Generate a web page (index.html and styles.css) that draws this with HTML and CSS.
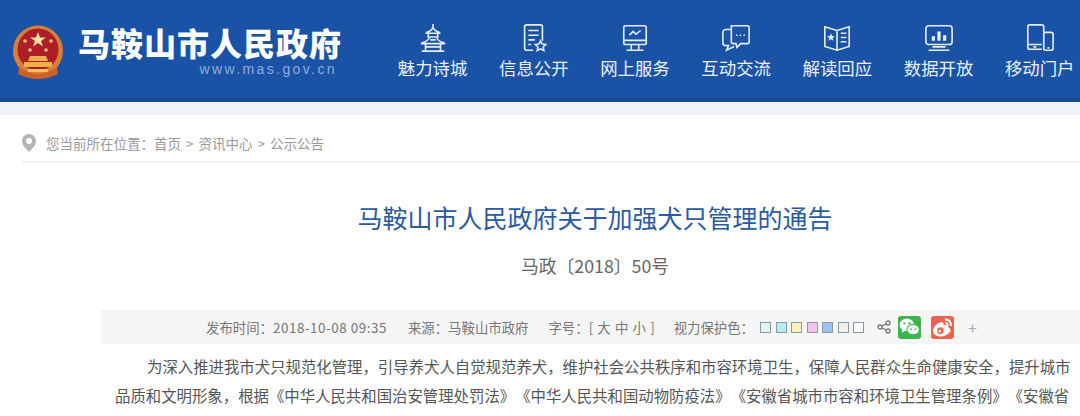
FILE: index.html
```html
<!DOCTYPE html>
<html lang="zh-CN">
<head>
<meta charset="utf-8">
<title>马鞍山市人民政府关于加强犬只管理的通告</title>
<link rel="stylesheet" href="styles.css">
</head>
<body>
<header class="top">
  <svg class="emblem" viewBox="0 0 50 56">
    <ellipse cx="25" cy="26" rx="25" ry="25.500" fill="#d67f36"/>
    <ellipse cx="25" cy="24.500" rx="20.500" ry="21" fill="#ad1e28"/>
    <path d="M25 7l2 5.500h5.800l-4.700 3.400 1.800 5.600-4.900-3.400-4.900 3.400 1.800-5.600-4.700-3.400H23z" fill="#f7dfa0"/>
    <circle cx="12" cy="16" r="1.800" fill="#f2c878"/><circle cx="38" cy="16" r="1.800" fill="#f2c878"/>
    <circle cx="17" cy="25" r="1.800" fill="#f2c878"/><circle cx="33" cy="25" r="1.800" fill="#f2c878"/>
    <path d="M17 31h16l2 5H15zM11 37h28v5H11z" fill="#eeb04a"/>
    <path d="M6 42q19 14 38 0l1 7q-20 10-40 0z" fill="#cf5f2a"/>
    <path d="M15 44h20v3H15z" fill="#f0c060"/>
  </svg>
  <div class="brand">
    <div class="brand-name">马鞍山市人民政府</div>
    <div class="brand-url">www.mas.gov.cn</div>
  </div>
  <nav class="nav">
    <a class="nav-item">
      <svg class="nav-icon" viewBox="0 0 32 32"><path d="M16 1v4M9 10q5-1 7-5 2 4 7 5M8 11h16M11 11v4M21 11v4M10 15h12M4 21q6-1 8-5M28 21q-6-1-8-5M3 22h26M8 22v7M24 22v7M8 25.500h16M4 30h24M13 18h6"/></svg>
      <span>魅力诗城</span>
    </a>
    <a class="nav-item">
      <svg class="nav-icon" viewBox="0 0 32 32"><path d="M15 29H8a2 2 0 0 1-2-2V4a2 2 0 0 1 2-2h15a2 2 0 0 1 2 2v15M10 8h11M10 13h11M10 18h7M10 23h3"/><path d="M23 19l1.800 3.500 3.700.5-2.700 2.600.7 3.700-3.500-1.800-3.500 1.800.7-3.700-2.700-2.600 3.700-.5z"/></svg>
      <span>信息公开</span>
    </a>
    <a class="nav-item">
      <svg class="nav-icon" viewBox="0 0 32 32"><rect x="4" y="3" width="24" height="20" rx="2"/><path d="M4 18.500h24M12 23v5M20 23v5M7 29h18M10 13l4-4 3 3 5-4"/></svg>
      <span>网上服务</span>
    </a>
    <a class="nav-item">
      <svg class="nav-icon" viewBox="0 0 32 32"><path d="M11 3h17a2 2 0 0 1 2 2v15a2 2 0 0 1-2 2H21l-4 4-1-4h-3a2 2 0 0 1-2-2z"/><path d="M11 7H5a3 3 0 0 0-3 3v11a3 3 0 0 0 3 3h3l-2 5 8-4"/><path d="M16 13h1.500M20 13h1.500M24 13h1.500"/></svg>
      <span>互动交流</span>
    </a>
    <a class="nav-item">
      <svg class="nav-icon" viewBox="0 0 32 32"><path d="M16 8L3 4v21l13 4 13-4V4zM16 8v21M20 11h6M20 15.500h6M20 20h6"/><path class="solid" d="M9.500 11l1.200 2.800 3 .2-2.300 2 .8 3-2.700-1.600L6.800 19l.8-3-2.300-2 3-.2z"/></svg>
      <span>解读回应</span>
    </a>
    <a class="nav-item">
      <svg class="nav-icon" viewBox="0 0 32 32"><rect x="2" y="3" width="28" height="20" rx="3"/><path d="M9 25.500h14M5 29h22"/><path class="bars" d="M10 14v5M16 9v10M22 13v6"/></svg>
      <span>数据开放</span>
    </a>
    <a class="nav-item">
      <svg class="nav-icon" viewBox="0 0 32 32"><path d="M18 28H5a2 2 0 0 1-2-2V4a2 2 0 0 1 2-2h13a2 2 0 0 1 2 2v6M3 23h15M9 25.500h3"/><rect x="20" y="10" width="10" height="19" rx="2"/><path d="M24 26.500h2"/></svg>
      <span>移动门户</span>
    </a>
  </nav>
</header>
<div class="band"></div>
<div class="crumb">
  <svg class="pin" viewBox="0 0 14 18"><path fill-rule="evenodd" d="M7 0a7 7 0 0 1 7 7c0 4-4 8-7 11-3-3-7-7-7-11a7 7 0 0 1 7-7zm0 4a3 3 0 1 0 0 6 3 3 0 0 0 0-6z"/></svg>
  <span>您当前所在位置：首页 &gt; 资讯中心 &gt; 公示公告</span>
</div>
<main class="article">
  <h1 class="title">马鞍山市人民政府关于加强犬只管理的通告</h1>
  <p class="docno">马政〔2018〕50号</p>
  <div class="meta">
    <span class="m-time">发布时间：<span class="m-date">2018-10-08 09:35</span></span>
    <span class="m-src">来源：马鞍山市政府</span>
    <span class="m-size">字号：[ 大 中 小 ]</span>
    <span class="m-eye">视力保护色：</span>
    <span class="swatches">
      <i class="sw s1"></i><i class="sw s2"></i><i class="sw s3"></i><i class="sw s4"></i><i class="sw s5"></i><i class="sw s6"></i><i class="sw s7"></i>
    </span>
    <svg class="share" viewBox="0 0 14 14"><circle cx="3" cy="7" r="2"/><circle cx="11" cy="3" r="2"/><circle cx="11" cy="11" r="2"/><path d="M5 6l4-2M5 8l4 2"/></svg>
    <span class="badge wechat">
      <svg viewBox="0 0 22 22"><ellipse cx="8.500" cy="8.500" rx="7" ry="6" fill="#fff"/><path d="M4.500 13l-1 3 3.500-2z" fill="#fff"/><ellipse cx="14.500" cy="13" rx="6" ry="5" fill="#fff" stroke="#3cb54a"/><circle cx="6.200" cy="7" r="1.100" fill="#3cb54a"/><circle cx="10.800" cy="7" r="1.100" fill="#3cb54a"/><circle cx="12.500" cy="12.500" r=".9" fill="#3cb54a"/><circle cx="16.500" cy="12.500" r=".9" fill="#3cb54a"/></svg>
    </span>
    <span class="badge weibo">
      <svg viewBox="0 0 22 22"><path d="M2 14c0-4 5-8 8-8 2 0 2.500 1.500 2 3 3-1 5 0 4.500 2 1.500.5 2 1.500 2 2.500 0 3-4 6-8.500 6S2 17.500 2 14z" fill="#fff"/><circle cx="9" cy="14" r="3.200" fill="#e8654f"/><circle cx="8.500" cy="14.500" r="1.300" fill="#fff"/><path d="M13.500 3.500a5 5 0 0 1 5.500 6" fill="none" stroke="#fff" stroke-width="2"/><path d="M13.500 6.800a2.200 2.200 0 0 1 2.500 2.700" fill="none" stroke="#fff" stroke-width="1.500"/></svg>
    </span>
    <span class="plus">+</span>
  </div>
  <p class="body-text">为深入推进我市犬只规范化管理，引导养犬人自觉规范养犬，维护社会公共秩序和市容环境卫生，保障人民群众生命健康安全，提升城市品质和文明形象，根据《中华人民共和国治安管理处罚法》《中华人民共和国动物防疫法》《安徽省城市市容和环境卫生管理条例》《安徽省</p>
</main>
</body>
</html>
```
FILE: styles.css
```css
* { box-sizing: border-box; }
html, body {
  margin: 0;
  height: 416px;
  overflow: hidden;
  background: #fff;
  font-family: "Noto Sans CJK SC", "Liberation Sans", sans-serif;
  text-spacing-trim: space-all;
}
.top {
  display: flex;
  align-items: flex-start;
  height: 102px;
  width: 1080px;
  padding-left: 13px;
  background: #1a53a6;
  border-bottom: 4px solid #17498f;
  overflow: hidden;
}
.emblem { width: 50px; height: 56px; margin-top: 25px; flex: none; }
.brand { width: 262px; margin-left: 15px; flex: none; }
.brand-name {
  margin-top: 24px;
  font-size: 32px;
  line-height: 36px;
  font-weight: 900;
  letter-spacing: 1px;
  color: #fff;
  white-space: nowrap;
}
.brand-url {
  margin-top: 1px;
  text-align: right;
  padding-right: 3px;
  font-family: "Liberation Sans", sans-serif;
  font-size: 14px;
  line-height: 16px;
  letter-spacing: 2.400px;
  color: #8eaddb;
}
.nav { display: flex; margin-left: 42px; flex: none; }
.nav-item {
  width: 101.200px;
  display: flex;
  flex-direction: column;
  align-items: center;
  padding-top: 23px;
  color: #eaf0fa;
  font-size: 17.400px;
  line-height: 26px;
  white-space: nowrap;
}
.nav-icon {
  width: 30px;
  height: 30px;
  margin-bottom: 2px;
  fill: none;
  stroke: #e6eefa;
  stroke-width: 1.700;
}
.nav-icon .solid { fill: #e6eefa; stroke: none; }
.nav-icon .bars { stroke-width: 3.500; }
.band { height: 13px; background: #f1f3fa; }
.crumb {
  display: flex;
  align-items: center;
  gap: 10px;
  height: 48px;
  margin-left: 22px;
  padding-top: 9px;
  border-bottom: 2px solid #f1f1f1;
  color: #9a9a9a;
  font-size: 13.500px;
  word-spacing: 2px;
  white-space: nowrap;
}
.pin { width: 14px; height: 18px; fill: #b4b4b4; flex: none; }
.article { width: 988px; margin-left: 101px; }
.title {
  margin: 37px 0 0;
  text-align: center;
  font-size: 25px;
  line-height: 34px;
  font-weight: 400;
  color: #2a5ba3;
}
.docno {
  margin: 18px 0 0;
  text-align: center;
  font-size: 17.800px;
  line-height: 26px;
  color: #666;
}
.meta {
  display: flex;
  align-items: center;
  height: 34px;
  margin-top: 32px;
  padding-left: 105px;
  background: #f5f5f5;
  color: #777;
  font-size: 13.400px;
  white-space: nowrap;
}
.m-date { letter-spacing: .55px; }
.m-src { margin-left: 21px; }
.m-size { margin-left: 20px; word-spacing: 1.200px; }
.m-eye { margin-left: 19px; }
.swatches { display: flex; gap: 4.500px; margin-left: 6px; }
.sw { display: block; width: 11px; height: 11px; border: 1px solid #8a9aa0; }
.s1 { background: #e0f7f5; }
.s2 { background: #b8ecf5; }
.s3 { background: #fbf2b8; }
.s4 { background: #f3c3ee; }
.s5 { background: #9cc4ee; }
.s6 { background: #f0f0f0; }
.s7 { background: #fff; }
.share {
  width: 14px;
  height: 14px;
  margin-left: 13px;
  fill: none;
  stroke: #777;
  stroke-width: 1.300;
}
.badge { display: block; width: 23px; height: 23px; border-radius: 3px; }
.badge svg { display: block; width: 100%; height: 100%; }
.wechat { margin-left: 7px; background: #3cb54a; }
.weibo { margin-left: 10px; background: #e8654f; }
.plus { margin-left: 14px; color: #aaa; font-size: 16px; }
.body-text {
  margin: 8px 0 0 14px;
  width: 958px;
  text-indent: 32px;
  font-size: 15.400px;
  line-height: 29px;
  color: #555;
}
```
